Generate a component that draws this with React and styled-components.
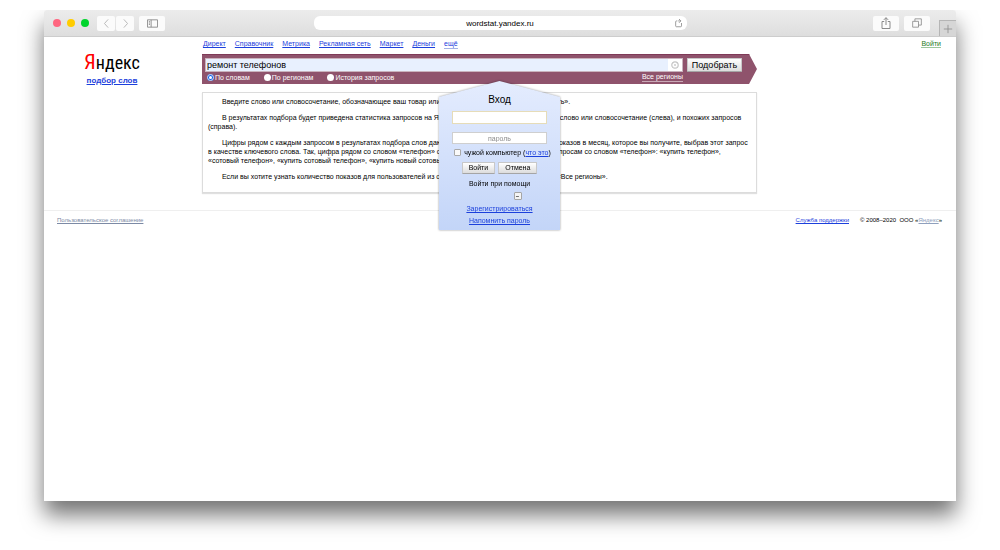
import React from "react";
import styled, { createGlobalStyle } from "styled-components";

const GlobalStyle = createGlobalStyle`
    *, *::before, *::after {
        box-sizing: border-box;
    }

    body {
        margin: 0;
        background-color: #fff;
        color: #000;
        font-family: "Liberation Sans", Arial, sans-serif;
        font-size: 7px;
        line-height: 9px;
    }

    button, input {
        margin: 0;
        padding: 0;
        font-family: inherit;
    }
`;

const Window = styled.div`
    display: flex;
    flex-direction: column;
    min-height: calc(100vh - 59px);
    margin: 10px 44px 49px;
    background-color: #fff;
    border-radius: 3px 3px 0 0;
    box-shadow: 0 14px 22px rgba(0, 0, 0, 0.55);
    /* the shadow falls to the sides and below only */
    clip-path: inset(0 -44px -49px -44px);
`;

const TitleBar = styled.header`
    display: grid;
    grid-template-columns: 1fr minmax(0, 373px) 1fr;
    align-items: center;
    height: 27px;
    background: linear-gradient(#ececec, #dedede);
    border-bottom: 1px solid #cdcdcd;
    border-radius: 3px 3px 0 0;
`;

const BarGroup = styled.div`
    display: flex;
    align-items: center;
    height: 26px;
    justify-content: ${(props) => (props.$end ? "flex-end" : "flex-start")};
    gap: ${(props) => (props.$end ? "5px" : "1px")};
`;

const Lights = styled.div`
    display: flex;
    gap: 6px;
    padding: 0 7px 0 9px;
`;

const Light = styled.span`
    width: 8px;
    height: 8px;
    border-radius: 50%;
    background-color: ${(props) => props.$color};
`;

const BarButton = styled.button`
    display: flex;
    align-items: center;
    justify-content: center;
    width: ${(props) => (props.$wide ? "26px" : "18px")};
    height: 15px;
    border: 0;
    border-radius: 2px;
    background-color: #fbfbfb;
    color: ${(props) => (props.$muted ? "#b4b4b4" : "#8a8a8a")};
`;

const Spacer = styled.span`
    width: 3px;
`;

const NewTab = styled.button`
    display: flex;
    align-items: center;
    justify-content: center;
    align-self: flex-end;
    width: 17px;
    height: 16px;
    margin-left: 4px;
    border: 1px solid #b5b5b5;
    border-width: 1px 0 0 1px;
    background-color: #d6d6d6;
    color: #8e8e8e;
`;

const AddressBar = styled.div`
    position: relative;
    height: 14px;
`;

const Address = styled.input`
    display: block;
    width: 100%;
    height: 14px;
    border: 0;
    border-radius: 6px;
    background-color: #fff;
    color: #000;
    font-size: 8px;
    text-align: center;
`;

const Reload = styled.button`
    position: absolute;
    top: 2px;
    right: 3px;
    display: flex;
    border: 0;
    background: none;
    color: #8a8a8a;
`;

const Page = styled.div`
    position: relative;
    flex: 1;
`;

const Top = styled.div`
    display: grid;
    grid-template-columns: 136px minmax(0, 1fr) 177px;
    column-gap: 22px;
    padding-bottom: 17px;
`;

const Brand = styled.div`
    display: flex;
    flex-direction: column;
    align-items: center;
    padding-top: 12px;
`;

const Logo = styled.a`
    display: block;
    color: #000;
    font-family: "Liberation Sans Narrow", "Roboto Condensed", "Open Sans Condensed", sans-serif;
    font-size: 18px;
    line-height: 26px;
    text-decoration: none;

    &::first-letter {
        color: #f00;
        font-size: 21px;
    }
`;

const Link = styled.a`
    color: ${(props) => props.$color || "#1c40dc"};
    text-decoration: underline;
`;

const BrandLink = styled(Link)`
    font-size: 8px;
    font-weight: bold;
    line-height: 10px;
`;

const Services = styled.nav`
    display: flex;
    gap: 9px;
    padding: 2px 0 5px 1px;
`;

const DottedLink = styled.a`
    color: ${(props) => props.$color};
    text-decoration: none;
    border-bottom: 1px solid ${(props) => props.$line};
`;

const Account = styled.div`
    padding: 2px 15px 0 0;
    text-align: right;
`;

const SearchForm = styled.form`
    display: grid;
    grid-template-columns: minmax(0, 1fr) 55px;
    column-gap: 4px;
    padding: 3px 15px 2px 3px;
    background-color: #8f536c;
    border-top: 1px solid #7f3a58;
    clip-path: polygon(0 0, calc(100% - 8px) 0, 100% 50%, calc(100% - 8px) 100%, 0 100%);
`;

const QueryBox = styled.div`
    display: flex;
    height: 14px;
    border: 1px solid #c9b3bd;
    background-color: #fff;
`;

const Query = styled.input`
    flex: 1;
    min-width: 0;
    padding-left: 1px;
    border: 0;
    background-color: #e8f0fe;
    color: #000;
    font-size: 9px;
`;

const Clear = styled.button`
    display: flex;
    align-items: center;
    justify-content: center;
    width: 14px;
    border: 0;
    background: none;
    color: #c4c4c4;
`;

const Button = styled.button`
    height: ${(props) => (props.$large ? "14px" : "12px")};
    padding: ${(props) => (props.$large ? "0" : "0 6px")};
    border: 1px solid #c8c8c8;
    border-bottom-color: #a5a5a5;
    border-radius: 1px;
    background: linear-gradient(#fff, #dcdcdc);
    color: #000;
    font-size: ${(props) => (props.$large ? "9px" : "7px")};
    line-height: 10px;
    white-space: nowrap;
`;

const Modes = styled.div`
    display: flex;
    align-items: center;
    gap: 14px;
    padding: 1px 0 0 2px;
    color: #fff;
`;

const Mode = styled.label`
    display: flex;
    align-items: center;
    gap: 1px;
`;

const Radio = styled.input`
    appearance: none;
    width: 7px;
    height: 7px;
    border-radius: 50%;
    background-color: #fff;

    &:checked {
        border: 2px solid #1266f1;
        outline: 1px solid #e6dbe1;
        outline-offset: -1px;
    }
`;

const Regions = styled(DottedLink)`
    margin-left: auto;
    line-height: 8px;
`;

const Info = styled.section`
    display: flex;
    flex-direction: column;
    gap: 7px;
    margin-top: 8px;
    padding: 4px 5px 11px;
    border: 1px solid #dcdcdc;
    box-shadow: 0 1px 1px rgba(0, 0, 0, 0.12);
    white-space: nowrap;
`;

const Paragraph = styled.p`
    margin: 0;
    text-indent: 14px;
`;

const Popup = styled.div`
    position: absolute;
    top: 44px;
    left: calc(50% - 61px);
    width: 121px;
    filter: drop-shadow(0 0 1px rgba(0, 0, 0, 0.4));
`;

const LoginForm = styled.form`
    display: flex;
    flex-direction: column;
    align-items: center;
    padding: 12px 13px 5px;
    background: linear-gradient(#e4ecfe, #c3d5f8);
    clip-path: polygon(0 16px, 50% 0, 100% 16px, 100% 100%, 0 100%);
`;

const LoginTitle = styled.h2`
    margin: 0 0 5px;
    font-size: 10px;
    font-weight: normal;
    line-height: 13px;
`;

const Field = styled.input`
    width: 100%;
    height: ${(props) => (props.$active ? "13px" : "12px")};
    margin-bottom: ${(props) => (props.$active ? "8px" : "4px")};
    border: 1px solid ${(props) => (props.$active ? "#e6dcb8" : "#cfcfcf")};
    background-color: #fff;
    font-size: 7px;
    text-align: center;

    &::placeholder {
        color: #8c8c8c;
    }
`;

const Foreign = styled.div`
    display: flex;
    align-items: center;
    gap: 3px;
    margin-bottom: 5px;
    padding-left: 6px;
    white-space: nowrap;
`;

const Check = styled.input`
    appearance: none;
    width: 7px;
    height: 7px;
    border: 1px solid #a9a9a9;
    border-radius: 1px;
    background-color: #fafafa;
`;

const Actions = styled.div`
    display: flex;
    gap: 3px;
    margin-bottom: 5px;
`;

const More = styled.button`
    width: 8px;
    height: 8px;
    margin: 4px 0 4px 36px;
    border: 1px solid #a5a5a5;
    border-radius: 1px;
    background-color: #f4f4f4;
    font-size: 6px;
    font-weight: bold;
    line-height: 4px;
`;

const LoginLinks = styled.div`
    display: flex;
    flex-direction: column;
    align-items: center;
    gap: 3px;
`;

const Footer = styled.footer`
    display: flex;
    gap: 11px;
    padding: 5px 14px 0 13px;
    border-top: 1px solid #efefef;
    font-size: 6px;
`;

const Agreement = styled(Link)`
    margin-right: auto;
`;

const Icon = ({ size = 11, children }) => (
    <svg width={size} height={size} viewBox="0 0 12 12" fill="none" stroke="currentColor" aria-hidden="true">
        {children}
    </svg>
);

const services = ["Директ", "Справочник", "Метрика", "Рекламная сеть", "Маркет", "Деньги"];
const modes = ["По словам", "По регионам", "История запросов"];

const BrowserBar = () => (
    <TitleBar>
        <BarGroup>
            <Lights>
                <Light $color="#ff6680" />
                <Light $color="#ffcc00" />
                <Light $color="#00d42c" />
            </Lights>
            <BarButton $muted aria-label="Назад">
                <Icon><path d="M7.8 1.5 3.8 6l4 4.5" /></Icon>
            </BarButton>
            <BarButton $muted aria-label="Вперёд">
                <Icon><path d="m4.2 1.5 4 4.5-4 4.5" /></Icon>
            </BarButton>
            <Spacer />
            <BarButton $wide aria-label="Боковая панель">
                <Icon><path d="M.5 2h11v8H.5zM4.5 2v8M2 4h1.3M2 5.5h1.3M2 7h1.3" /></Icon>
            </BarButton>
        </BarGroup>
        <AddressBar>
            <Address type="text" aria-label="Адрес" defaultValue="wordstat.yandex.ru" />
            <Reload aria-label="Обновить">
                <Icon size={10}>
                    <path d="M4 3.5H3a1 1 0 0 0-1 1v5a1 1 0 0 0 1 1h5a1 1 0 0 0 1-1V6M5 3.5h3M6 1.2l2.300 2.300L6 5.800" />
                </Icon>
            </Reload>
        </AddressBar>
        <BarGroup $end>
            <BarButton $wide aria-label="Поделиться">
                <Icon size={12}><path d="M4.2 4.5H2v7h8v-7H7.8M6 8V.7M3.8 2.9 6 .7l2.2 2.2" /></Icon>
            </BarButton>
            <BarButton $wide aria-label="Вкладки">
                <Icon size={10}><path d="M.8 4h7v7h-7zM3.5 4V1h7.7v7.5H7.8" /></Icon>
            </BarButton>
            <NewTab aria-label="Новая вкладка">
                <Icon size={10}><path d="M6 1v10M1 6h10" /></Icon>
            </NewTab>
        </BarGroup>
    </TitleBar>
);

const Search = () => (
    <SearchForm onSubmit={(e) => e.preventDefault()}>
        <QueryBox>
            <Query type="text" aria-label="Запрос" defaultValue="ремонт телефонов" />
            <Clear type="button" aria-label="Очистить">
                <Icon size={8}>
                    <circle cx="6" cy="6" r="4.8" strokeWidth="1.8" />
                    <path d="m4.2 4.2 3.6 3.6M7.8 4.2 4.2 7.8" />
                </Icon>
            </Clear>
        </QueryBox>
        <Button $large>Подобрать</Button>
        <Modes>
            {modes.map((mode, index) => (
                <Mode key={mode}>
                    <Radio type="radio" name="mode" defaultChecked={index === 0} />
                    {mode}
                </Mode>
            ))}
            <Regions href="#regions" $color="#fff" $line="#c9a9b6">Все регионы</Regions>
        </Modes>
    </SearchForm>
);

const Login = () => (
    <Popup>
        <LoginForm onSubmit={(e) => e.preventDefault()}>
            <LoginTitle>Вход</LoginTitle>
            <Field $active type="text" aria-label="Логин" />
            <Field type="password" aria-label="Пароль" placeholder="пароль" />
            <Foreign>
                <Check type="checkbox" id="foreign" />
                <span>
                    <label htmlFor="foreign">чужой компьютер</label> (<Link href="#what">что это</Link>)
                </span>
            </Foreign>
            <Actions>
                <Button>Войти</Button>
                <Button type="button">Отмена</Button>
            </Actions>
            <span>Войти при помощи</span>
            <More type="button">–</More>
            <LoginLinks>
                <Link href="#register">Зарегистрироваться</Link>
                <Link href="#remind">Напомнить пароль</Link>
            </LoginLinks>
        </LoginForm>
    </Popup>
);

const App = () => (
    <>
        <GlobalStyle />
        <Window>
            <BrowserBar />
            <Page>
                <Top>
                    <Brand>
                        <Logo href="#yandex">Яндекс</Logo>
                        <BrandLink href="#wordstat">подбор слов</BrandLink>
                    </Brand>
                    <main>
                        <Services>
                            {services.map((name) => <Link key={name} href="#service">{name}</Link>)}
                            <DottedLink href="#more" $color="#1c40dc" $line="#a3b1e6">ещё</DottedLink>
                        </Services>
                        <Search />
                        <Info>
                            <Paragraph>
                                Введите слово или словосочетание, обозначающее ваш товар или услугу, и нажмите кнопку «Подобрать».
                            </Paragraph>
                            <Paragraph>
                                В результатах подбора будет приведена статистика запросов на Яндексе, включающих заданное вами слово или словосочетание (слева), и похожих запросов<br />
                                (справа).
                            </Paragraph>
                            <Paragraph>
                                Цифры рядом с каждым запросом в результатах подбора слов дают предварительный прогноз числа показов в месяц, которое вы получите, выбрав этот запрос<br />
                                в качестве ключевого слова. Так, цифра рядом со словом «телефон» обозначает число показов по всем запросам со словом «телефон»: «купить телефон»,<br />
                                «сотовый телефон», «купить сотовый телефон», «купить новый сотовый».
                            </Paragraph>
                            <Paragraph>
                                Если вы хотите узнать количество показов для пользователей из определенного региона, нажмите на «Все регионы».
                            </Paragraph>
                        </Info>
                    </main>
                    <Account>
                        <DottedLink href="#login" $color="#1b7a1b" $line="#9cc79c">Войти</DottedLink>
                    </Account>
                </Top>
                <Footer>
                    <Agreement href="#agreement" $color="#7c8aa5">Пользовательское соглашение</Agreement>
                    <Link href="#support">Служба поддержки</Link>
                    <span>© 2008–2020&nbsp; ООО «<Link href="#company" $color="#8fa0bd">Яндекс</Link>»</span>
                </Footer>
                <Login />
            </Page>
        </Window>
    </>
);

export default App;
